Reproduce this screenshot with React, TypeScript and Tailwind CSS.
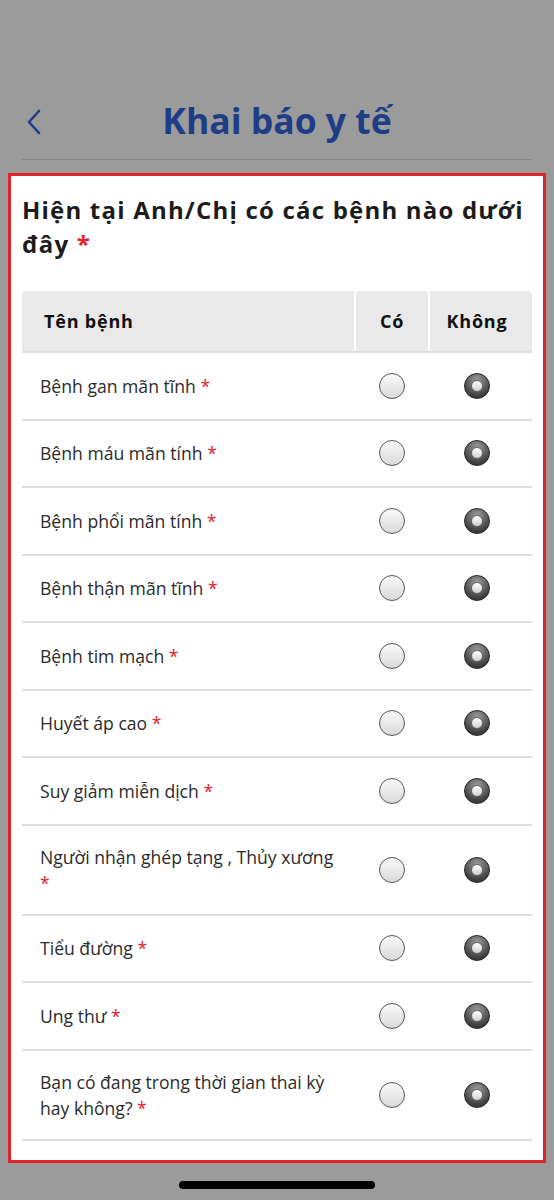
import React from "react";

const diseases = [
  "Bệnh gan mãn tĩnh",
  "Bệnh máu mãn tính",
  "Bệnh phổi mãn tính",
  "Bệnh thận mãn tĩnh",
  "Bệnh tim mạch",
  "Huyết áp cao",
  "Suy giảm miễn dịch",
  "Người nhận ghép tạng , Thủy xương",
  "Tiểu đường",
  "Ung thư",
  "Bạn có đang trong thời gian thai kỳ hay không?",
];

function Radio({ checked }: { checked?: boolean }) {
  if (checked) {
    return (
      <span className="flex h-[26px] w-[26px] items-center justify-center rounded-full border border-[#222] bg-[radial-gradient(circle_at_50%_25%,#9a9a9a,#3c3c3c_75%)]">
        <span className="h-[12px] w-[12px] rounded-full border border-[#666] bg-[linear-gradient(#ffffff,#d0d0d0)]" />
      </span>
    );
  }
  return (
    <span className="block h-[26px] w-[26px] rounded-full border-[1.5px] border-[#555] bg-[linear-gradient(#fafafa,#d9d9d9)]" />
  );
}

export default function App() {
  return (
    <div className="min-h-[1200px] bg-[#9b9b9b] font-['Open_Sans',sans-serif]">
      {/* top bar */}
      <div className="h-[97px]" />
      <div className="relative mx-[22px] flex h-[48px] items-center justify-center">
        <svg
          className="absolute left-[4px] top-[12px]"
          width="16"
          height="26"
          viewBox="0 0 16 26"
          fill="none"
        >
          <path
            d="M13 2 L3 13 L13 24"
            stroke="#1d3d86"
            strokeWidth="2.6"
            strokeLinecap="round"
            strokeLinejoin="round"
          />
        </svg>
        <h1 className="text-[35.5px] font-bold leading-none text-[#1d3d86]">
          Khai báo y tế
        </h1>
      </div>
      <div className="mx-[22px] mt-[14px] h-px bg-[#868686]" />

      {/* form card */}
      <div className="mx-[8px] mt-[13px] border-[3px] border-[#e2222b] bg-white px-[11px] pb-[19px] pt-[17px]">
        <h2 className="text-[24px] font-bold leading-[34px] tracking-[1.2px] text-[#1c1c1c]">
          Hiện tại Anh/Chị có các bệnh nào dưới đây{" "}
          <span className="text-[#e2222b]">*</span>
        </h2>

        <div className="mt-[30px]">
          <div className="flex h-[62px] items-stretch border-b-2 border-[#dedede] text-[18px] font-bold tracking-[0.8px] text-[#111]">
            <div className="flex flex-1 items-center rounded-tl-[4px] bg-[#e9e9e9] pl-[22px]">
              Tên bệnh
            </div>
            <div className="ml-[2px] flex w-[72px] items-center justify-center bg-[#e9e9e9]">
              Có
            </div>
            <div className="ml-[2px] flex w-[102px] items-center justify-center rounded-tr-[4px] bg-[#e9e9e9] pr-[8px]">
              Không
            </div>
          </div>

          {diseases.map((d) => (
            <div
              key={d}
              className="flex min-h-[67.5px] items-center border-b-2 border-[#dedede]"
            >
              <div className="flex-1 py-[18px] pl-[18px] pr-[16px] text-[17.6px] leading-[26px] text-[#2b2b2b]">
                {d} <span className="text-[#e2222b]">*</span>
              </div>
              <div className="flex w-[74px] justify-center pr-[2px]">
                <Radio />
              </div>
              <div className="flex w-[102px] justify-center pr-[8px]">
                <Radio checked />
              </div>
            </div>
          ))}
        </div>
      </div>

      {/* home indicator */}
      <div className="mt-[18px] flex justify-center">
        <div className="h-[8px] w-[196px] rounded-full bg-black" />
      </div>
    </div>
  );
}
